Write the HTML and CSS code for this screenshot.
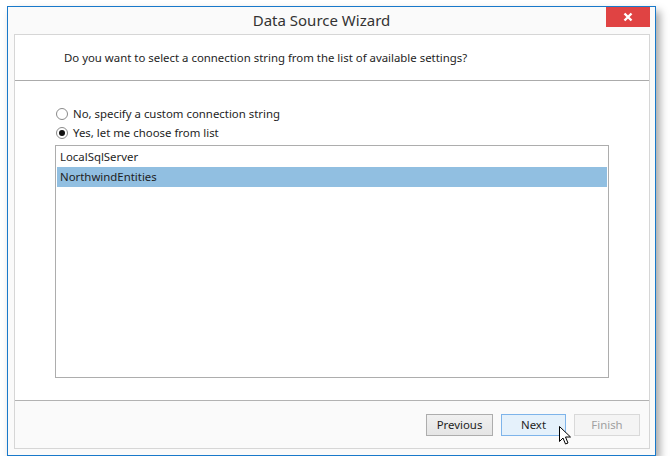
FILE: index.html
```html
<!DOCTYPE html>
<html>
<head>
<meta charset="utf-8">
<link rel="stylesheet" href="styles.css">
</head>
<body>
<div class="window">
  <div class="titlebar">
    <div class="title">Data Source Wizard</div>
    <div class="close">
      <svg width="10" height="10" viewBox="0 0 10 10"><path d="M1.5 1.5 L8.5 8.5 M8.5 1.5 L1.5 8.5" stroke="#fff" stroke-width="2.4"/></svg>
    </div>
  </div>
  <div class="inner">
    <div class="header">Do you want to select a connection string from the list of available settings?</div>
    <div class="body">
      <label class="radio"><span class="circle"></span>No, specify a custom connection string</label>
      <label class="radio"><span class="circle checked"></span>Yes, let me choose from list</label>
      <div class="list">
        <div class="item">LocalSqlServer</div>
        <div class="item selected">NorthwindEntities</div>
      </div>
    </div>
    <div class="footer">
      <div class="btn prev">Previous</div>
      <div class="btn hot">Next
        <svg class="cursor" width="14" height="20" viewBox="0 0 14 20"><path d="M0.5 0.5 L0.5 15.5 L4 12 L6.5 18 L9 17 L6.5 11 L11.5 11 Z" fill="#fff" stroke="#000" stroke-width="1" stroke-linejoin="miter"/></svg>
      </div>
      <div class="btn disabled">Finish</div>
    </div>
  </div>
</div>
</body>
</html>
```

FILE: styles.css
```css
html, body {
  margin: 0;
  padding: 0;
  background: #fff;
}
body {
  font-family: "Noto Sans", "Open Sans", sans-serif;
  font-size: 11px;
  color: #1e1e1e;
}
.window {
  margin: 6px 0 0 7px;
  width: 647px;
  height: 448px;
  border: 1px solid #1979ca;
  background: #fafafa;
  box-shadow: 4px 5px 8px rgba(0, 0, 0, 0.35);
  display: flex;
  flex-direction: column;
}
.titlebar {
  height: 27px;
  display: flex;
  justify-content: center;
  position: relative;
  padding-right: 20px;
}
.title {
  font-size: 15px;
  line-height: 27px;
  color: #333;
}
.close {
  position: absolute;
  top: 0;
  right: 5px;
  width: 44px;
  height: 20px;
  background: #e04343;
  display: flex;
  align-items: center;
  justify-content: center;
}
.inner {
  flex: 1;
  margin: 0 5px 6px 6px;
  border: 1px solid #d6d6d6;
  display: flex;
  flex-direction: column;
}
.header {
  height: 45px;
  background: #fff;
  border-bottom: 1px solid #ababab;
  padding-left: 49px;
  line-height: 45px;
  font-size: 11.4px;
}
.body {
  flex: 1;
  background: #fff;
  padding: 23px 40px 22px 40px;
  display: flex;
  flex-direction: column;
}
.radio {
  display: flex;
  align-items: center;
  height: 19px;
  font-size: 11.4px;
}
.circle {
  width: 12px;
  height: 12px;
  border: 1px solid #8a8a8a;
  border-radius: 50%;
  background: #fff;
  margin-right: 5px;
  box-sizing: border-box;
  position: relative;
  margin-left: 1px;
}
.circle.checked::after {
  content: "";
  position: absolute;
  left: 2px;
  top: 2px;
  width: 6px;
  height: 6px;
  border-radius: 50%;
  background: #111;
}
.list {
  margin-top: 3px;
  flex: 1;
  border: 1px solid #adadad;
  padding: 1px;
}
.item {
  height: 20px;
  line-height: 20px;
  padding-left: 3px;
  font-size: 11.4px;
}
.item.selected {
  background: #91bfe1;
}
.footer {
  height: 48px;
  border-top: 1px solid #b2b2b2;
  background: #fafafa;
  display: flex;
  justify-content: flex-end;
  align-items: flex-start;
  padding: 13px 9px 0 0;
  box-sizing: border-box;
  gap: 8px;
}
.btn {
  width: 64px;
  height: 20px;
  border: 1px solid #adadad;
  background: linear-gradient(#f0f0f0, #e5e5e5);
  text-align: center;
  line-height: 20px;
  font-size: 11.4px;
  position: relative;
}
.btn.prev {
  width: 65px;
}
.btn.hot {
  background: #e5f1fb;
  border-color: #7eb4ea;
  width: 63px;
}
.btn.disabled {
  background: #f4f4f4;
  border-color: #d9d9d9;
  color: #a0a0a0;
}
.cursor {
  position: absolute;
  left: 57px;
  top: 11px;
}
```
